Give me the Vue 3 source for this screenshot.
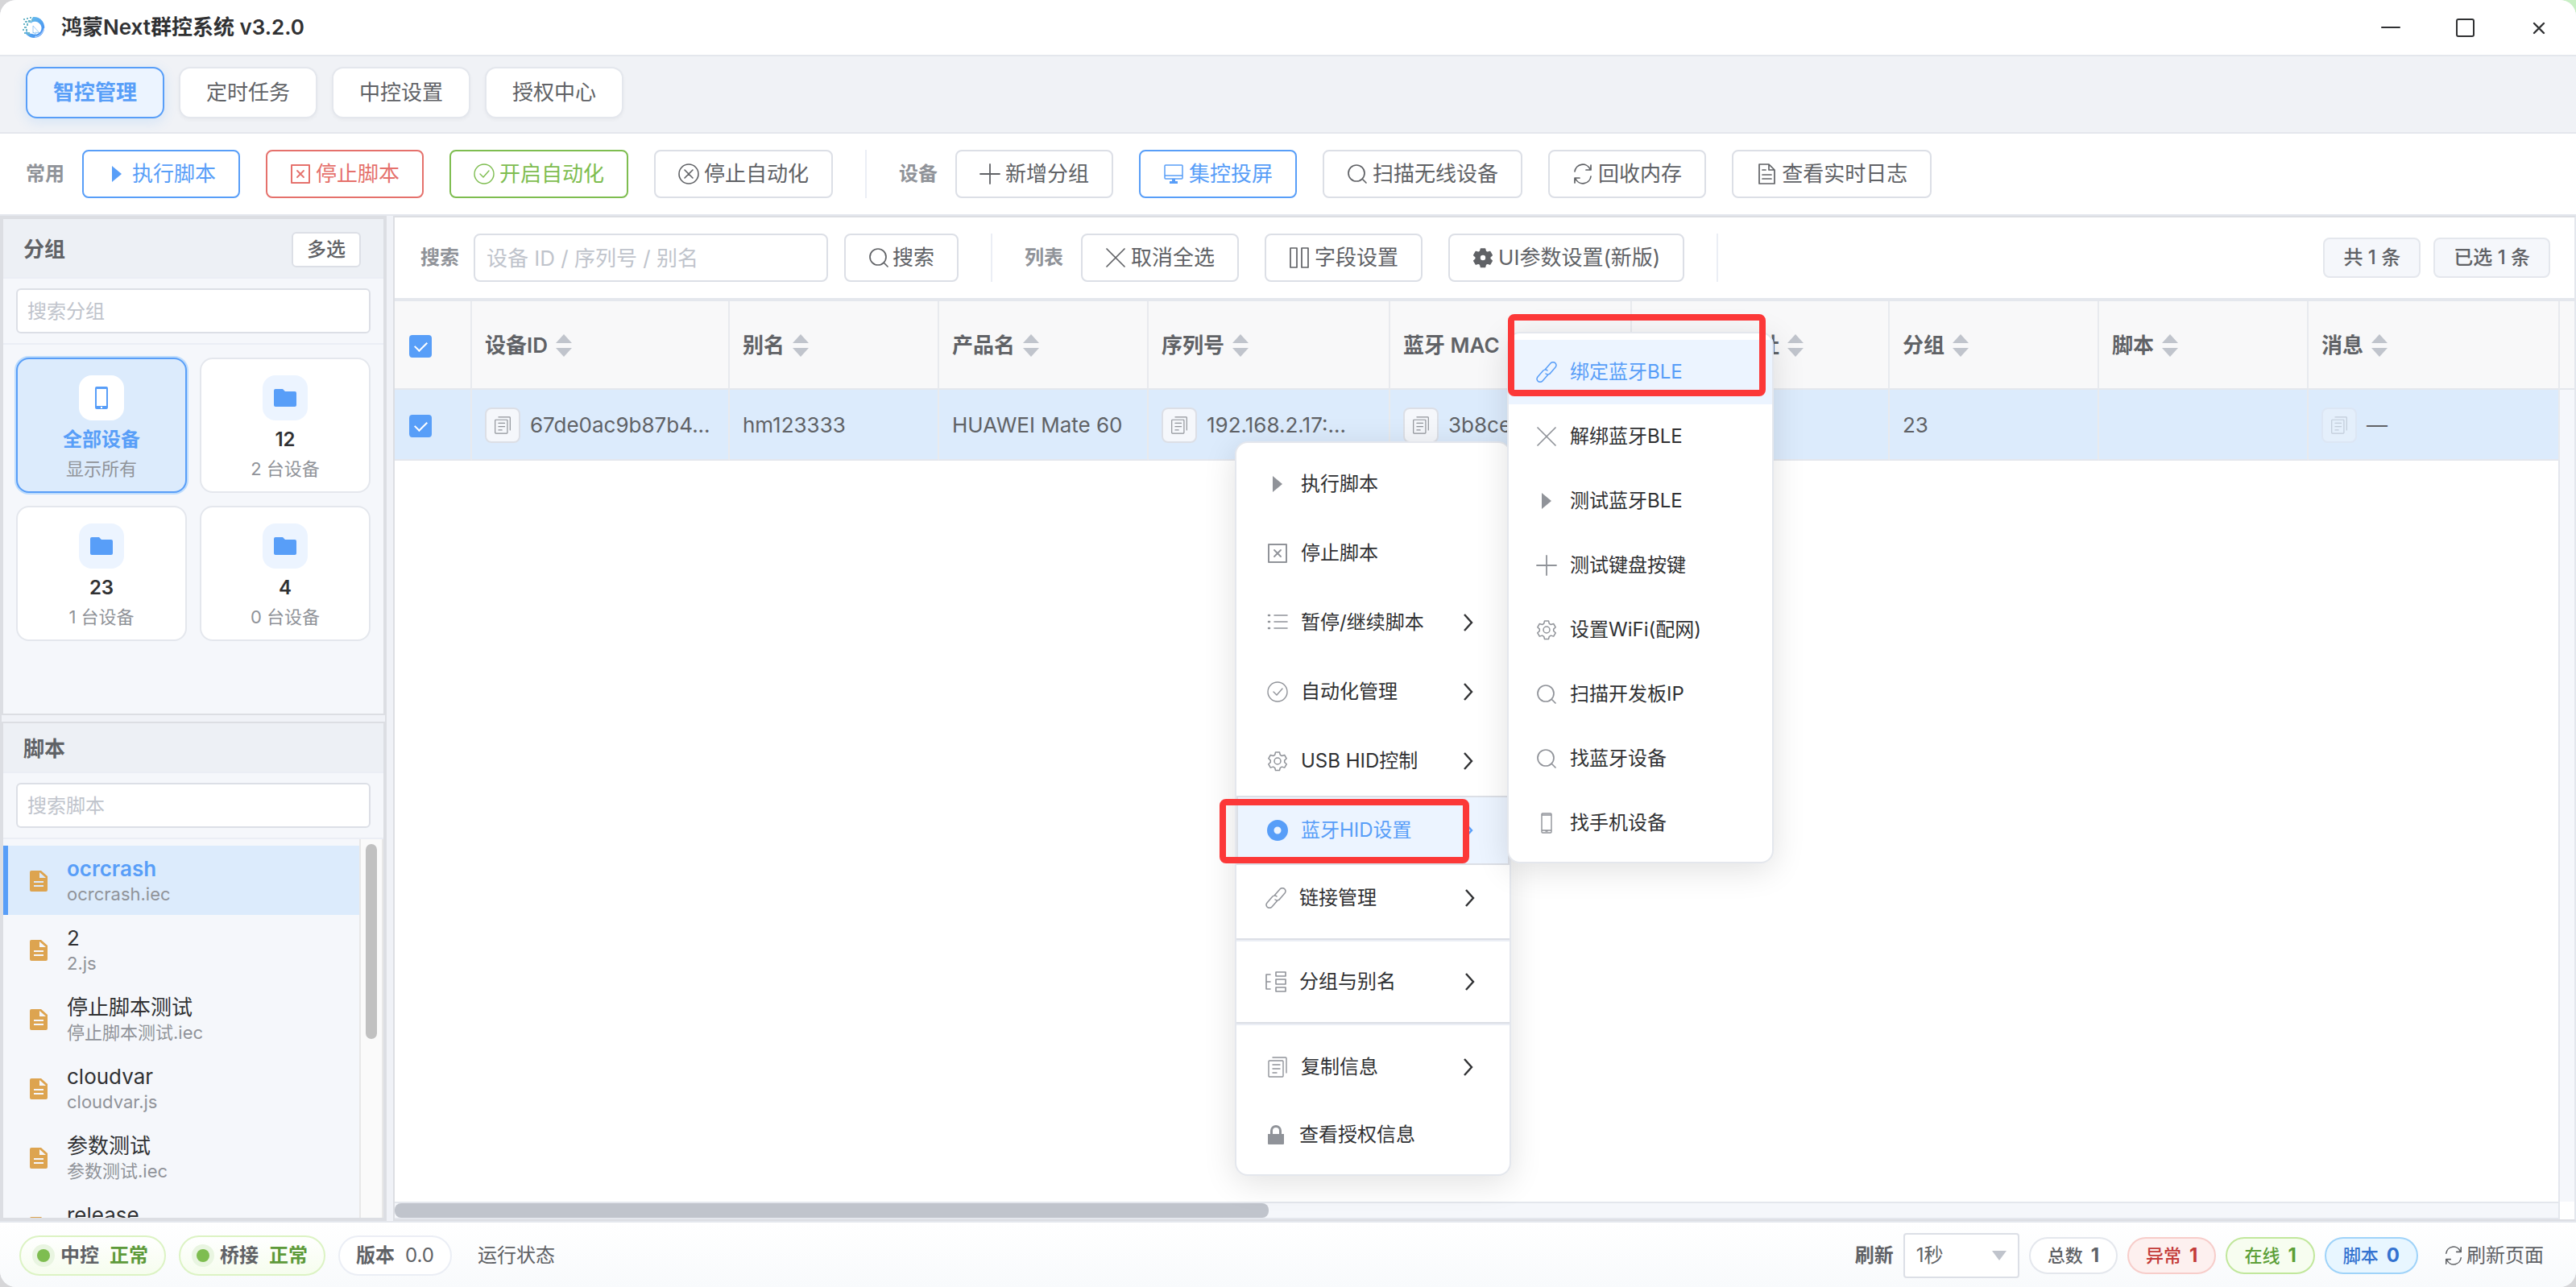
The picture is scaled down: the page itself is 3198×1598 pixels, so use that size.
<template>
  <div class="app">
    <!-- 标题栏 -->
    <header class="title-bar">
      <svg class="logo" viewBox="0 0 28 28">
        <defs>
          <linearGradient id="logoFill" x1="0" y1="0" x2="1" y2="1">
            <stop offset="0" stop-color="#6cc6ea" />
            <stop offset="1" stop-color="#3f86f4" />
          </linearGradient>
        </defs>
        <path d="M13 1a13 13 0 1 1-9 21c-1-3 1-3 4-1a9 9 0 0 0 4 1 8 8 0 1 0-2-13c0-2 1-5 3-8z" fill="url(#logoFill)" />
        <path d="M13 12l8 9-5-1 1 5-3-5-1 1z" fill="#fff" stroke="#5aa9f0" stroke-width=".6" />
        <path d="M15 26c6-1 10-5 12-11" fill="none" stroke="#fff" stroke-width=".7" />
        <g fill="#6fb7c9">
          <rect x="1" y="3" width="2" height="2" /><rect x="5" y="2" width="2" height="2" />
          <rect x="9" y="1" width="2" height="2" /><rect x="3" y="6" width="3" height="2" />
          <rect x="7" y="5" width="3" height="3" /><rect x="1" y="9" width="2" height="2" />
          <rect x="5" y="9" width="2" height="3" /><rect x="2" y="13" width="3" height="2" />
          <rect x="0" y="16" width="2" height="2" /><rect x="4" y="16" width="2" height="3" />
          <rect x="2" y="20" width="2" height="2" /><rect x="6" y="20" width="3" height="3" />
          <rect x="11" y="4" width="2" height="2" />
        </g>
      </svg>
      <h1>鸿蒙Next群控系统 v3.2.0</h1>
      <div class="window-controls">
        <button aria-label="最小化"><svg viewBox="0 0 24 24" v-html="icons.min"></svg></button>
        <button aria-label="最大化"><svg viewBox="0 0 24 24" v-html="icons.max"></svg></button>
        <button aria-label="关闭"><svg viewBox="0 0 24 24" v-html="icons.exit"></svg></button>
      </div>
    </header>

    <nav class="tab-bar">
      <button
        v-for="tab in tabs"
        :key="tab"
        class="tab"
        :class="{ active: tab === activeTab }"
        @click="activeTab = tab">{{ tab }}</button>
    </nav>

    <!-- 主工具栏 -->
    <div class="toolbar">
      <span class="bar-label">常用</span>
      <div class="btn-row">
        <button v-for="b in commonActions" :key="b.text" class="btn" :class="b.type">
          <svg class="icon" viewBox="0 0 26 26" v-html="icons[b.icon]"></svg>{{ b.text }}
        </button>
      </div>
      <i class="split"></i>
      <span class="bar-label">设备</span>
      <div class="btn-row">
        <button v-for="b in deviceActions" :key="b.text" class="btn" :class="b.type">
          <svg class="icon" viewBox="0 0 26 26" v-html="icons[b.icon]"></svg>{{ b.text }}
        </button>
      </div>
    </div>

    <div class="body">
      <!-- 左侧：分组与脚本 -->
      <aside class="sidebar">
        <section class="panel">
          <div class="panel-header group-header">
            <h2>分组</h2>
            <button class="btn-small">多选</button>
          </div>
          <div class="panel-search">
            <input v-model="groupKeyword" type="text" placeholder="搜索分组" aria-label="搜索分组">
          </div>
          <div class="group-grid">
            <button
              v-for="g in groups"
              :key="g.name"
              class="group-card"
              :class="{ active: g.name === activeGroup }"
              @click="activeGroup = g.name">
              <span class="group-icon">
                <svg viewBox="0 0 28 28" v-html="g.name === '全部设备' ? icons.phoneLarge : icons.folder"></svg>
              </span>
              <strong>{{ g.name }}</strong>
              <small>{{ g.desc }}</small>
            </button>
          </div>
        </section>

        <section class="panel">
          <div class="panel-header">
            <h2>脚本</h2>
          </div>
          <div class="panel-search">
            <input v-model="scriptKeyword" type="text" placeholder="搜索脚本" aria-label="搜索脚本">
          </div>
          <div class="script-body">
            <ul class="script-list">
              <li
                v-for="s in scripts"
                :key="s.name"
                :class="{ active: s.name === activeScript }"
                @click="activeScript = s.name">
                <svg viewBox="0 0 22 26" v-html="icons.script"></svg>
                <div>
                  <p class="script-name">{{ s.name }}</p>
                  <p class="script-file">{{ s.file }}</p>
                </div>
              </li>
            </ul>
            <div class="v-track"><div class="v-thumb"></div></div>
          </div>
        </section>
      </aside>

      <!-- 右侧：设备列表 -->
      <main class="main">
        <div class="toolbar list-toolbar">
          <label class="bar-label" for="deviceSearch">搜索</label>
          <input id="deviceSearch" v-model="deviceKeyword" class="device-search" type="text" placeholder="设备 ID / 序列号 / 别名">
          <button class="btn search-btn">
            <svg class="icon" viewBox="0 0 26 26" v-html="icons.search"></svg>搜索
          </button>
          <i class="split"></i>
          <span class="bar-label">列表</span>
          <div class="btn-row">
            <button v-for="b in listActions" :key="b.text" class="btn">
              <svg class="icon" viewBox="0 0 26 26" v-html="icons[b.icon]"></svg>{{ b.text }}
            </button>
          </div>
          <i class="split"></i>
          <div class="counts">
            <span>共 1 条</span>
            <span>已选 1 条</span>
          </div>
        </div>

        <div class="table-area">
          <div class="table-scroll">
            <table>
              <colgroup>
                <col class="w-check">
                <col v-for="c in columns" :key="c.key" :class="c.width">
                <col class="w-gutter">
              </colgroup>
              <thead>
                <tr>
                  <th class="check-cell"><input v-model="checked" type="checkbox" aria-label="全选"></th>
                  <th v-for="c in columns" :key="c.key">
                    <span class="th-inner">{{ c.title }}<i class="sort"></i></span>
                  </th>
                  <th></th>
                </tr>
              </thead>
              <tbody>
                <tr>
                  <td class="check-cell"><input v-model="checked" type="checkbox" aria-label="选择设备"></td>
                  <td v-for="c in columns" :key="c.key">
                    <div class="cell">
                      <button v-if="c.copy" class="copy-btn" :disabled="c.key === 'message'" aria-label="复制">
                        <svg viewBox="0 0 26 26" v-html="icons.copy"></svg>
                      </button>
                      <span>{{ device[c.key] }}</span>
                    </div>
                  </td>
                  <td class="gutter"></td>
                </tr>
              </tbody>
            </table>
            <div class="table-gutter"></div>
          </div>
          <div class="h-track"><div class="h-thumb"></div></div>
        </div>
      </main>
    </div>

    <!-- 底部状态栏 -->
    <footer class="status-bar">
      <span class="pill ok"><i class="dot"></i><b>中控</b><em>正常</em></span>
      <span class="pill ok"><i class="dot"></i><b>桥接</b><em>正常</em></span>
      <span class="pill"><b>版本</b>0.0</span>
      <span class="run-state">运行状态</span>
      <div class="status-right">
        <label for="interval">刷新</label>
        <select id="interval" v-model="interval">
          <option>1秒</option>
          <option>3秒</option>
          <option>5秒</option>
        </select>
        <span v-for="s in stats" :key="s.label" class="stat" :class="s.type">{{ s.label }}<b>{{ s.value }}</b></span>
        <button class="refresh-btn">
          <svg class="icon" viewBox="0 0 26 26" v-html="icons.refresh"></svg>刷新页面
        </button>
      </div>
    </footer>

    <!-- 右键菜单 -->
    <div class="menu context-menu">
      <template v-for="m in menuItems" :key="m.text">
        <hr v-if="m.divided">
        <button class="menu-item" :class="{ plain: m.plain, active: m.active }">
          <svg class="icon" viewBox="0 0 26 26" v-html="icons[m.icon]"></svg>
          <span>{{ m.text }}</span>
          <svg v-if="m.arrow" class="arrow" viewBox="0 0 14 24"><path d="M2 2l9 10-9 10" /></svg>
        </button>
      </template>
    </div>
    <div class="menu sub-menu">
      <button v-for="m in bleItems" :key="m.text" class="menu-item" :class="{ active: m.active }">
        <svg class="icon" viewBox="0 0 26 26" v-html="icons[m.icon]"></svg>
        <span>{{ m.text }}</span>
      </button>
    </div>
    <div class="mark mark-hid"></div>
    <div class="mark mark-ble"></div>
  </div>
</template>

<script setup>
import { ref } from 'vue'

const line = (d, w = 1.6) => `<path d="${d}" fill="none" stroke="currentColor" stroke-width="${w}" stroke-linecap="round" stroke-linejoin="round"/>`
const solid = (d) => `<path d="${d}" fill="currentColor" fill-rule="evenodd"/>`

const gear = 'M10.5 2h5l.8 3.3 2.1 1.2 3.3-1 2.5 4.3-2.5 2.3v2.4l2.5 2.3-2.5 4.3-3.3-1-2.1 1.2-.8 3.2h-5l-.8-3.2-2.1-1.2-3.3 1-2.5-4.3 2.5-2.3v-2.4L1.8 9.8l2.5-4.3 3.3 1 2.1-1.2z'

const icons = {
  play: solid('M7 3v20l12-10z'),
  stop: line('M2 2h22v22H2z', 2) + line('M9 9l8 8M17 9l-8 8', 1.8),
  check: line('M13 1a12 12 0 1 0 0 24 12 12 0 0 0 0-24zM8 13l4 4 7-8', 1.4),
  close: line('M13 1a12 12 0 1 0 0 24 12 12 0 0 0 0-24zM8 8l10 10M18 8L8 18'),
  plus: line('M13 1v24M1 13h24', 1.8),
  cross: line('M2 2l22 22M24 2L2 24', 1.7),
  monitor: line('M3 2h20a1 1 0 0 1 1 1v15a1 1 0 0 1-1 1H3a1 1 0 0 1-1-1V3a1 1 0 0 1 1-1zM2 15h22', 1.5) + solid('M11 19h4v3h3v3H8v-3h3z'),
  search: line('M12 2a10 10 0 1 0 0 20 10 10 0 0 0 0-20zM19 19l5 5', 1.7),
  refresh: line('M3 10a10 10 0 0 1 19-3M23 16a10 10 0 0 1-19 3M23 2v6h-6M3 24v-6h6', 1.7),
  doc: line('M4 1h12l7 7v17H4zM16 1v7h7M8 8h4M8 14h11M8 19h11', 1.7),
  columns: line('M2 1h8v24H2zM16 1h8v24h-8z', 1.7),
  gearSolid: `<path d="${gear}M13 9a4 4 0 1 0 0 8 4 4 0 0 0 0-8z" fill="currentColor" fill-rule="evenodd" stroke="currentColor" stroke-width="1.6" stroke-linejoin="round"/>`,
  gear: line(gear + 'M13 9a4 4 0 1 0 0 8 4 4 0 0 0 0-8z', 1.5),
  list: line('M9 4h16M9 12h16M9 20h16', 1.6) + line('M2 4h1M2 12h1M2 20h1', 2.6),
  ring: solid('M13 0a13 13 0 1 0 0 26 13 13 0 0 0 0-26zM13 8.500a4.500 4.500 0 1 1 0 9 4.500 4.500 0 0 1 0-9z'),
  link: line('M11 10l7-8a4 4 0 0 1 6 0 4 4 0 0 1 0 5l-6 7a4 4 0 0 1-6 1M15 16l-7 8a4 4 0 0 1-6 0 4 4 0 0 1 0-5l6-7a4 4 0 0 1 6-1', 1.5),
  tree: line('M6 4H1v18h5M1 13h5M13 1h12v5H13zM13 10h12v6H13zM13 20h12v5H13z', 1.6),
  copy: line('M3 5h16a1 1 0 0 1 1 1v18a1 1 0 0 1-1 1H3a1 1 0 0 1-1-1V6a1 1 0 0 1 1-1zM7 1h16a1 1 0 0 1 1 1v18M7 10h9M7 15h9M7 20h5', 1.4),
  lock: solid('M3 12h3V8a7 7 0 0 1 14 0v4h3v12a1 1 0 0 1-1 1H4a1 1 0 0 1-1-1zM9 12h8V8a4 4 0 0 0-8 0z'),
  phone: line('M8 1h10a1 1 0 0 1 1 1v22a1 1 0 0 1-1 1H8a1 1 0 0 1-1-1V2a1 1 0 0 1 1-1zM7 3h12M7 22h12M12 23h2', 1.4),
  phoneLarge: solid('M8 0h12a2 2 0 0 1 2 2v24a2 2 0 0 1-2 2H8a2 2 0 0 1-2-2V2a2 2 0 0 1 2-2zM8 3v21h12V3zM13 25h2v2h-2z'),
  folder: solid('M2 3h9l3 3h12a2 2 0 0 1 2 2v15a2 2 0 0 1-2 2H2a2 2 0 0 1-2-2V5a2 2 0 0 1 2-2z'),
  script: solid('M2 0h12l8 7v17a2 2 0 0 1-2 2H2a2 2 0 0 1-2-2V2a2 2 0 0 1 2-2zM12 2v7h8zM5 13h12v2H5zM5 18h12v2H5z'),
  min: line('M1 12h22', 2),
  max: line('M4 2h17a2 2 0 0 1 2 2v17a2 2 0 0 1-2 2H4a2 2 0 0 1-2-2V4a2 2 0 0 1 2-2z', 2),
  exit: line('M6 7l12 12M18 7L6 19', 2.4)
}

const tabs = ['智控管理', '定时任务', '中控设置', '授权中心']
const activeTab = ref('智控管理')

const commonActions = [
  { text: '执行脚本', icon: 'play', type: 'primary' },
  { text: '停止脚本', icon: 'stop', type: 'danger' },
  { text: '开启自动化', icon: 'check', type: 'success' },
  { text: '停止自动化', icon: 'close' }
]
const deviceActions = [
  { text: '新增分组', icon: 'plus' },
  { text: '集控投屏', icon: 'monitor', type: 'primary' },
  { text: '扫描无线设备', icon: 'search' },
  { text: '回收内存', icon: 'refresh' },
  { text: '查看实时日志', icon: 'doc' }
]
const listActions = [
  { text: '取消全选', icon: 'cross' },
  { text: '字段设置', icon: 'columns' },
  { text: 'UI参数设置(新版)', icon: 'gearSolid' }
]

const groupKeyword = ref('')
const activeGroup = ref('全部设备')
const groups = [
  { name: '全部设备', desc: '显示所有' },
  { name: '12', desc: '2 台设备' },
  { name: '23', desc: '1 台设备' },
  { name: '4', desc: '0 台设备' }
]

const scriptKeyword = ref('')
const activeScript = ref('ocrcrash')
const scripts = [
  { name: 'ocrcrash', file: 'ocrcrash.iec' },
  { name: '2', file: '2.js' },
  { name: '停止脚本测试', file: '停止脚本测试.iec' },
  { name: 'cloudvar', file: 'cloudvar.js' },
  { name: '参数测试', file: '参数测试.iec' },
  { name: 'release', file: '' }
]

const deviceKeyword = ref('')
const checked = ref(true)
const columns = [
  { key: 'id', title: '设备ID', width: 'w-id', copy: true },
  { key: 'alias', title: '别名', width: 'w-text' },
  { key: 'product', title: '产品名', width: 'w-text' },
  { key: 'serial', title: '序列号', width: 'w-net', copy: true },
  { key: 'mac', title: '蓝牙 MAC', width: 'w-net', copy: true },
  { key: 'address', title: '开发板 IP 地址', width: 'w-id' },
  { key: 'group', title: '分组', width: 'w-text' },
  { key: 'script', title: '脚本', width: 'w-text' },
  { key: 'message', title: '消息', width: 'w-rest', copy: true }
]
const device = {
  id: '67de0ac9b87b4...',
  alias: 'hm123333',
  product: 'HUAWEI Mate 60',
  serial: '192.168.2.17:...',
  mac: '3b8ce',
  group: '23',
  message: '—'
}

const menuItems = [
  { text: '执行脚本', icon: 'play' },
  { text: '停止脚本', icon: 'stop' },
  { text: '暂停/继续脚本', icon: 'list', arrow: true },
  { text: '自动化管理', icon: 'check', arrow: true },
  { text: 'USB HID控制', icon: 'gear', arrow: true },
  { text: '蓝牙HID设置', icon: 'ring', arrow: true, active: true },
  { text: '链接管理', icon: 'link', arrow: true, plain: true },
  { text: '分组与别名', icon: 'tree', arrow: true, plain: true, divided: true },
  { text: '复制信息', icon: 'copy', arrow: true, divided: true },
  { text: '查看授权信息', icon: 'lock', plain: true }
]
const bleItems = [
  { text: '绑定蓝牙BLE', icon: 'link', active: true },
  { text: '解绑蓝牙BLE', icon: 'cross' },
  { text: '测试蓝牙BLE', icon: 'play' },
  { text: '测试键盘按键', icon: 'plus' },
  { text: '设置WiFi(配网)', icon: 'gear' },
  { text: '扫描开发板IP', icon: 'search' },
  { text: '找蓝牙设备', icon: 'search' },
  { text: '找手机设备', icon: 'phone' }
]

const interval = ref('1秒')
const stats = [
  { label: '总数', value: 1 },
  { label: '异常', value: 1, type: 'error' },
  { label: '在线', value: 1, type: 'online' },
  { label: '脚本', value: 0, type: 'script' }
]
</script>

<style>
body {
  background: linear-gradient(225deg, #c8efc4 0, #c8efc4 20px, #d6d6d8 40px);
}
</style>

<style scoped>
* {
  box-sizing: border-box;
}

.app {
  position: relative;
  display: flex;
  flex-direction: column;
  height: 100vh;
  overflow: hidden;
  border-radius: 20px;
  background: #f0f2f7;
  color: #606266;
  font-family: Inter, "Noto Sans CJK SC", sans-serif;
  font-size: 26px;
  line-height: 36px;
}

button,
input,
select {
  font: inherit;
  color: inherit;
}

button {
  cursor: pointer;
}

h1,
h2,
p,
ul {
  margin: 0;
  padding: 0;
  font-size: 26px;
}

/* 标题栏 */
.title-bar {
  display: flex;
  align-items: center;
  flex: none;
  height: 70px;
  padding-left: 28px;
  border-bottom: 2px solid #e4e7ed;
  background: #fff;
}

.title-bar h1 {
  margin-left: 20px;
  font-weight: 600;
  color: #303133;
}

.logo {
  width: 28px;
  height: 28px;
}

.window-controls {
  display: flex;
  margin-left: auto;
}

.window-controls button {
  display: flex;
  align-items: center;
  justify-content: center;
  width: 92px;
  height: 68px;
  padding: 0;
  border: none;
  background: none;
  color: #303133;
}

.window-controls svg {
  width: 24px;
  height: 24px;
}

/* 页签 */
.tab-bar {
  display: flex;
  flex: none;
  gap: 18px;
  padding: 13px 32px 17px;
  border-bottom: 2px solid #e4e7ed;
  background: #f0f2f6;
}

.tab {
  height: 64px;
  padding: 0 32px;
  border: 2px solid #e4e7ed;
  border-radius: 14px;
  background: #fff;
  box-shadow: 0 2px 4px rgba(0, 0, 0, 0.04);
}

.tab.active {
  border-color: #589ef8;
  background: #ecf4ff;
  box-shadow: 0 4px 16px rgba(64, 158, 255, 0.16);
  color: #589ef8;
  font-weight: 600;
}

/* 工具栏 */
.toolbar {
  display: flex;
  align-items: center;
  flex: none;
  height: 102px;
  padding: 0 32px;
  border-bottom: 2px solid #e4e7ed;
  background: #fff;
}

.bar-label {
  margin-right: 22px;
  color: #909399;
  font-size: 24px;
  font-weight: 600;
}

.btn-row {
  display: flex;
  gap: 32px;
}

.btn {
  display: flex;
  align-items: center;
  gap: 6px;
  height: 60px;
  padding: 0 28px;
  border: 2px solid #dcdfe6;
  border-radius: 8px;
  background: #fff;
  white-space: nowrap;
}

.btn.primary {
  border-color: #589ef8;
  color: #589ef8;
}

.btn.danger {
  border-color: #e5716c;
  color: #e5716c;
}

.btn.success {
  border-color: #7ebd50;
  color: #7ebd50;
}

.icon {
  flex: none;
  width: 26px;
  height: 26px;
}

.split {
  width: 2px;
  height: 60px;
  margin: 0 40px;
  background: #ebeef5;
}

/* 主体 */
.body {
  display: flex;
  flex: 1;
  min-height: 0;
  gap: 8px;
}

.sidebar {
  display: flex;
  flex: none;
  flex-direction: column;
  gap: 8px;
  width: 480px;
  border: 2px solid #dcdee3;
}

.panel {
  display: flex;
  flex: 1;
  flex-direction: column;
  min-height: 0;
  overflow: hidden;
  border: 2px solid #dcdee3;
  background: #f5f7fb;
}

.panel-header {
  display: flex;
  align-items: center;
  justify-content: space-between;
  flex: none;
  height: 62px;
  padding: 4px 28px 0 25px;
  border-bottom: 2px solid #ebeef5;
  background: #edf0f5;
}

.panel-header.group-header {
  height: 74px;
}

.panel-header h2 {
  font-weight: 600;
}

.btn-small {
  height: 44px;
  padding: 0 17px;
  border: 2px solid #dcdfe6;
  border-radius: 6px;
  background: #fff;
  font-size: 24px;
  font-weight: 500;
  line-height: 36px;
}

.panel-search {
  padding: 12px 16px;
  border-bottom: 2px solid #ebeef5;
}

.panel-search input {
  display: block;
  width: 100%;
  height: 56px;
  padding: 0 12px;
  border: 2px solid #dcdfe6;
  border-radius: 6px;
  background: #fff;
  font-size: 24px;
}

input::placeholder {
  color: #c0c4cc;
  opacity: 1;
}

.group-grid {
  display: grid;
  grid-template-columns: 1fr 1fr;
  gap: 16px;
  padding: 16px;
}

.group-card {
  display: flex;
  flex-direction: column;
  align-items: center;
  height: 168px;
  padding: 20px 0 0;
  border: 2px solid #e4e7ed;
  border-radius: 16px;
  background: #fff;
}

.group-card strong {
  margin-top: 6px;
  color: #303133;
  font-size: 24px;
  font-weight: 600;
}

.group-card small {
  color: #909399;
  font-size: 22px;
}

.group-icon {
  display: flex;
  align-items: center;
  justify-content: center;
  width: 56px;
  height: 56px;
  border-radius: 16px;
  background: #ecf4ff;
  color: #589ef8;
}

.group-icon svg {
  width: 28px;
  height: 28px;
}

.group-card.active {
  border-color: #589ef8;
  background: #dcebfc;
  box-shadow: 0 0 0 2px rgba(64, 158, 255, 0.3);
}

.group-card.active strong {
  color: #589ef8;
}

.group-card.active .group-icon {
  background: #fff;
}

.script-body {
  display: flex;
  flex: 1;
  min-height: 0;
}

.script-list {
  flex: 1;
  padding-top: 8px;
  overflow: hidden;
  list-style: none;
}

.script-list li {
  display: flex;
  align-items: center;
  gap: 24px;
  height: 86px;
  padding: 2px 0 0 27px;
  border-left: 6px solid transparent;
}

.script-list li.active {
  border-left-color: #589ef8;
  background: #dcebfc;
}

.script-list svg {
  width: 22px;
  height: 26px;
  color: #dda450;
}

.script-name {
  color: #303133;
  line-height: 32px;
}

.script-list li.active .script-name {
  color: #589ef8;
  font-weight: 600;
}

.script-file {
  min-height: 30px;
  color: #909399;
  font-size: 22px;
  line-height: 30px;
}

.v-track {
  width: 30px;
  padding: 6px;
  border-left: 2px solid #e8e8e8;
  border-right: 2px solid #e8e8e8;
  background: #fafafa;
}

.v-thumb {
  height: 242px;
  border-radius: 8px;
  background: #c1c1c1;
}

/* 设备列表 */
.main {
  display: flex;
  flex: 1;
  flex-direction: column;
  min-width: 0;
  border: 2px solid #dcdee3;
  border-right-color: #e4e7ed;
  background: #fff;
}

.list-toolbar {
  height: 104px;
  padding-right: 30px;
  border-bottom-width: 4px;
}

.list-toolbar label.bar-label {
  margin-right: 18px;
}

.device-search {
  width: 440px;
  height: 60px;
  padding: 0 14px;
  border: 2px solid #dcdfe6;
  border-radius: 8px;
  background: #fff;
}

.search-btn {
  gap: 4px;
  margin-left: 20px;
}

.counts {
  display: flex;
  gap: 16px;
  margin-left: auto;
}

.counts span {
  height: 50px;
  padding: 0 23px;
  border: 2px solid #e4e7ed;
  border-radius: 8px;
  background: #f5f7fb;
  font-size: 24px;
  font-weight: 500;
  line-height: 46px;
}

.table-area {
  display: flex;
  flex: 1;
  flex-direction: column;
  min-height: 0;
}

.table-scroll {
  display: flex;
  flex: 1;
  flex-direction: column;
  min-height: 0;
}

table {
  width: 100%;
  table-layout: fixed;
  border-collapse: separate;
  border-spacing: 0;
}

.w-check {
  width: 96px;
}

.w-id {
  width: 320px;
}

.w-text {
  width: 260px;
}

.w-net {
  width: 300px;
}

.w-gutter {
  width: 18px;
}

th,
td {
  padding: 2px 16px 0;
  border-right: 2px solid #e8eaee;
  border-bottom: 2px solid #e4e7ed;
  text-align: left;
  vertical-align: middle;
}

th:last-child,
td:last-child {
  padding: 0;
  border-right: none;
}

th {
  height: 110px;
  background: #f8f8f9;
  font-weight: 600;
  white-space: nowrap;
}

td {
  height: 88px;
  background: #dcebfc;
}

.check-cell {
  padding: 4px 18px 0;
}

td.gutter {
  border-bottom: none;
  background: #f5f7fb;
}

.th-inner {
  display: flex;
  align-items: center;
  gap: 10px;
}

.sort {
  display: flex;
  flex-direction: column;
  gap: 6px;
}

.sort::before,
.sort::after {
  content: "";
  border: 10px solid transparent;
  border-top-width: 0;
  border-bottom: 11px solid #c0c4cc;
}

.sort::after {
  border-top: 11px solid #c0c4cc;
  border-bottom-width: 0;
  border-bottom-color: transparent;
}

input[type="checkbox"] {
  display: block;
  width: 28px;
  height: 28px;
  margin: 0;
  border: 2px solid #dcdfe6;
  border-radius: 4px;
  appearance: none;
  background: #fff;
}

input[type="checkbox"]:checked {
  border-color: #589ef8;
  background: #589ef8;
}

input[type="checkbox"]:checked::after {
  content: "";
  display: block;
  width: 7px;
  height: 13px;
  margin: 3px 0 0 8px;
  border: solid #fff;
  border-width: 0 2px 2px 0;
  transform: rotate(45deg);
}

.cell {
  display: flex;
  align-items: center;
  gap: 12px;
  overflow: hidden;
  white-space: nowrap;
}

.copy-btn {
  display: flex;
  align-items: center;
  justify-content: center;
  flex: none;
  width: 44px;
  height: 44px;
  padding: 0;
  border: 2px solid #dcdfe6;
  border-radius: 8px;
  background: #f5f7fb;
  color: #909399;
}

.copy-btn:disabled {
  opacity: 0.35;
}

.copy-btn svg {
  width: 22px;
  height: 22px;
}

.table-gutter {
  align-self: flex-end;
  flex: 1;
  width: 20px;
  border-left: 2px solid #e4e7ed;
  background: #f5f7fb;
}

.h-track {
  flex: none;
  height: 22px;
  margin-right: 18px;
  border-top: 2px solid #e4e7ed;
  border-bottom: 2px solid #e4e7ed;
  border-right: 2px solid #e4e7ed;
  background: #f5f7fb;
}

.h-thumb {
  width: 40.4%;
  height: 18px;
  border-radius: 8px;
  background: #c0c4cc;
}

/* 状态栏 */
.status-bar {
  display: flex;
  align-items: center;
  flex: none;
  gap: 16px;
  height: 82px;
  padding: 2px 40px 0 24px;
  border-top: 2px solid #e4e7ed;
  background: linear-gradient(#fff, #f8fafc);
  font-size: 24px;
}

.pill {
  display: flex;
  align-items: center;
  gap: 13px;
  height: 50px;
  padding: 0 20px;
  border: 2px solid #ebeef5;
  border-radius: 25px;
  background: #fff;
}

.pill b {
  font-weight: 600;
}

.pill.ok {
  border-color: #dcf3c4;
  background: linear-gradient(#fff, #f6fdee);
}

.pill em {
  color: #5d9a3a;
  font-style: normal;
  font-weight: 600;
}

.dot {
  width: 16px;
  height: 16px;
  border-radius: 50%;
  background: #7ebd50;
  box-shadow: 0 0 0 6px #e9f5e1;
}

.run-state {
  margin-left: 16px;
}

.status-right {
  display: flex;
  align-items: center;
  gap: 12px;
  margin-left: auto;
}

.status-right label {
  font-weight: 600;
}

.status-right select {
  width: 144px;
  height: 56px;
  padding: 0 14px;
  border: 2px solid #dcdfe6;
  border-radius: 4px;
  appearance: none;
  background: #fff url("data:image/svg+xml,%3Csvg xmlns='http://www.w3.org/2000/svg' viewBox='0 0 18 12'%3E%3Cpath d='M0 0h18l-9 12z' fill='%23c0c4cc'/%3E%3C/svg%3E") no-repeat right 14px center / 18px 12px;
}

.stat {
  display: flex;
  align-items: center;
  gap: 10px;
  height: 46px;
  padding: 0 21px;
  border: 2px solid #e4e7ed;
  border-radius: 23px;
  background: #fff;
  font-size: 22px;
  font-weight: 500;
}

.stat b {
  font-size: 24px;
  font-weight: 700;
}

.stat.error {
  border-color: #f7cdca;
  background: #fdf0ef;
  color: #c33a38;
}

.stat.online {
  border-color: #c1e79c;
  background: #f7fdf0;
  color: #5c9f38;
}

.stat.script {
  border-color: #9fd3f9;
  background: #e8f6ff;
  color: #3372d0;
}

.refresh-btn {
  display: flex;
  align-items: center;
  gap: 4px;
  margin-left: 20px;
  padding: 0;
  border: none;
  background: none;
}

.refresh-btn .icon {
  width: 24px;
  height: 24px;
}

/* 右键菜单 */
.menu {
  position: absolute;
  padding: 8px 0;
  border: 2px solid #e4e7ed;
  border-radius: 16px;
  background: #fff;
  box-shadow: 0 8px 40px rgba(0, 0, 0, 0.12);
  font-size: 24px;
}

.context-menu {
  top: 548px;
  left: 1533px;
  width: 343px;
}

.sub-menu {
  top: 412px;
  left: 1871px;
  width: 331px;
}

.menu-item {
  display: flex;
  align-items: center;
  gap: 16px;
  width: 100%;
  height: 86px;
  padding: 0 42px 0 36px;
  border: 2px solid transparent;
  background: none;
  color: #303133;
  text-align: left;
}

.menu-item.plain {
  height: 82px;
  border: none;
}

.menu-item .icon {
  color: #909399;
}

.menu-item .arrow {
  width: 14px;
  height: 24px;
  margin-left: auto;
  fill: none;
  stroke: currentColor;
  stroke-width: 2.4;
}

.menu-item.active {
  border-color: #dcdfe6;
  background: #ecf4ff;
  color: #589ef8;
}

.menu-item.active .icon {
  color: #589ef8;
}

.sub-menu .menu-item {
  height: 80px;
  padding: 0 32px;
  border-color: transparent;
}

hr {
  height: 4px;
  margin: 9px 0;
  border: none;
  border-top: 2px solid #dcdfe6;
  background: #ebeef5;
}

.mark {
  position: absolute;
  border: 8px solid #fc3838;
  border-radius: 8px;
  pointer-events: none;
}

.mark-hid {
  top: 992px;
  left: 1514px;
  width: 310px;
  height: 80px;
}

.mark-ble {
  top: 390px;
  left: 1872px;
  width: 320px;
  height: 102px;
}
</style>
